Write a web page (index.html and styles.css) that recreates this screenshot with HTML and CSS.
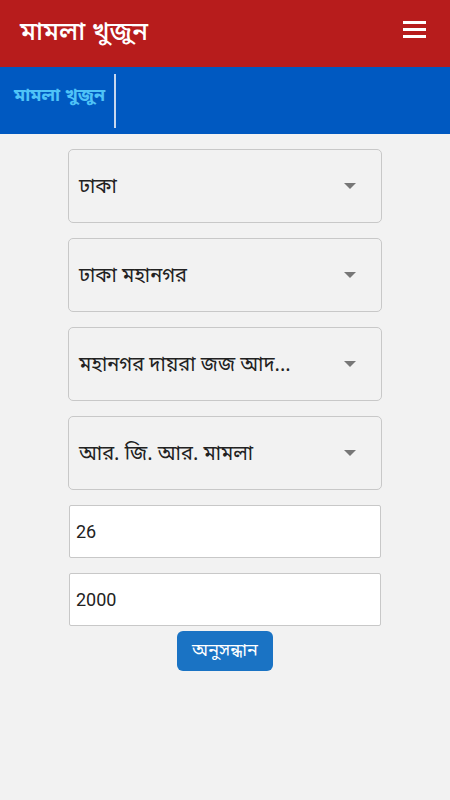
FILE: index.html
```html
<!DOCTYPE html>
<html lang="bn">
<head>
<meta charset="utf-8">
<link rel="stylesheet" href="styles.css">
</head>
<body>
<header class="topbar">
  <h1 class="title">মামলা খুজুন</h1>
  <button class="menu" aria-label="menu">
    <svg width="23" height="17" viewBox="0 0 23 17"><rect x="0" y="0" width="23" height="3" fill="#fff"/><rect x="0" y="7" width="23" height="3" fill="#fff"/><rect x="0" y="14" width="23" height="3" fill="#fff"/></svg>
  </button>
</header>
<nav class="tabs">
  <span class="tab">মামলা খুজুন</span>
</nav>
<main class="form">
  <div class="select"><span class="sel-text">ঢাকা</span><span class="arrow"></span></div>
  <div class="select"><span class="sel-text">ঢাকা মহানগর</span><span class="arrow"></span></div>
  <div class="select"><span class="sel-text">মহানগর দায়রা জজ আদ...</span><span class="arrow"></span></div>
  <div class="select"><span class="sel-text">আর. জি. আর. মামলা</span><span class="arrow"></span></div>
  <div class="input">26</div>
  <div class="input">2000</div>
  <button class="search">অনুসন্ধান</button>
</main>
</body>
</html>
```
FILE: styles.css
```css
* { box-sizing: border-box; }
body {
  margin: 0;
  background: #f2f2f2;
  font-family: "Noto Sans Bengali", "Noto Sans", Roboto, sans-serif;
  width: 450px;
  height: 800px;
}
.topbar {
  height: 67px;
  background: #b71c1c;
  display: flex;
  align-items: center;
  justify-content: space-between;
  padding: 0 24px 0 20px;
}
.title {
  margin: 0;
  color: #fff;
  font-size: 26px;
  font-weight: 500;
}
.menu {
  background: none;
  border: 0;
  padding: 0;
  display: flex;
  margin-top: -8px;
}
.tabs {
  height: 67px;
  background: #0059c1;
  display: flex;
  align-items: flex-start;
  padding: 7px 0 0 14px;
}
.tab {
  color: #4fc3f7;
  font-weight: 700;
  font-size: 18px;
  padding: 0 9px 10px 0;
  border-right: 2px solid #c7d7ee;
  height: 54px;
  display: flex;
  align-items: center;
}
.form {
  display: flex;
  flex-direction: column;
  align-items: center;
  padding-top: 15px;
}
.select {
  width: 314px;
  height: 74px;
  border: 1px solid #c8c8c8;
  border-radius: 5px;
  display: flex;
  align-items: center;
  justify-content: space-between;
  padding: 3px 25px 0 10px;
  margin-bottom: 15px;
  font-size: 20px;
  color: #222;
}
.arrow {
  width: 0;
  height: 0;
  margin-top: -3px;
  border-left: 6px solid transparent;
  border-right: 6px solid transparent;
  border-top: 6px solid #777;
}
.input {
  width: 312px;
  height: 53px;
  background: #fff;
  border: 1px solid #c8c8c8;
  border-radius: 2px;
  display: flex;
  align-items: center;
  padding-left: 6px;
  font-family: Roboto, sans-serif;
  font-size: 18px;
  color: #222;
  margin-bottom: 15px;
}
.search {
  margin-top: -10px;
  width: 96px;
  height: 40px;
  background: #1a73c4;
  color: #fff;
  border: 0;
  border-radius: 6px;
  font-family: inherit;
  font-size: 18px;
}
```
